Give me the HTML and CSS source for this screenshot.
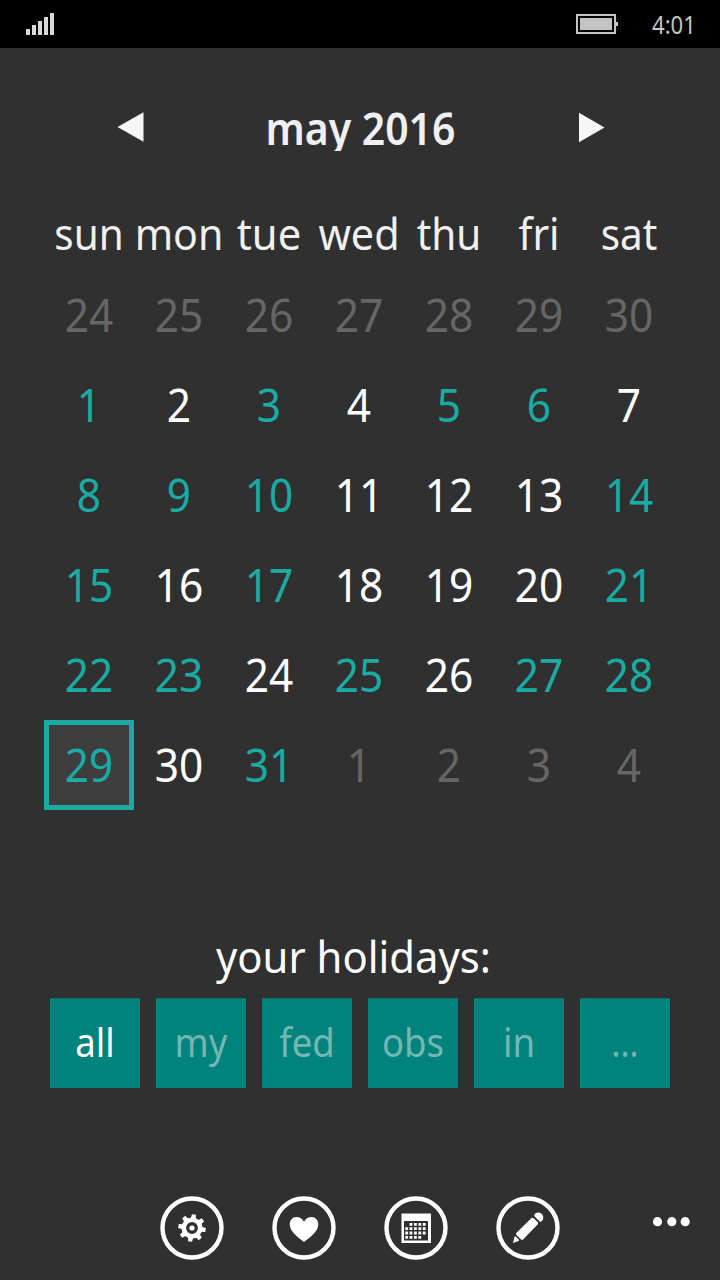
FILE: index.html
```html
<!DOCTYPE html>
<html lang="en">
<head>
<meta charset="utf-8">
<title>Holiday calendar</title>
<link rel="stylesheet" href="styles.css">
</head>
<body>
<div class="phone">
  <header class="status">
    <svg class="signal" width="28" height="22" viewBox="0 0 28 22" fill="#d8d8d8"><path d="M0 16h4v6H0zM6 12h4v10H6zM12 8h4v14h-4zM18 4h4v18h-4zM24 0h4v22h-4z"/></svg>
    <svg class="battery" width="42" height="20" viewBox="0 0 42 20"><path d="M1 1h38v18H1z" fill="none" stroke="#c4c4c4" stroke-width="2"/><path d="M4 4h32v12H4zM40 8h2v4h-2z" fill="#c4c4c4"/></svg>
    <span class="clock">4:01</span>
  </header>

  <nav class="month">
    <svg class="arrow prev" width="30" height="34" viewBox="0 0 30 34"><path d="M2.500 17 28.500 2.200V31.800z" fill="#f6f6f8"/></svg>
    <h1 class="month-name">may 2016</h1>
    <svg class="arrow next" width="30" height="34" viewBox="0 0 30 34"><path d="M28.500 17.500 3 2.800V32.200z" fill="#f6f6f8"/></svg>
  </nav>

  <div class="weekdays"><span class="sun">sun</span><span class="mon">mon</span><span class="tue">tue</span><span class="wed">wed</span><span class="thu">thu</span><span class="fri">fri</span><span class="sat">sat</span></div>

  <main class="days">
    <span class="day out">24</span><span class="day out">25</span><span class="day out">26</span><span class="day out">27</span><span class="day out">28</span><span class="day out">29</span><span class="day out">30</span>
    <span class="day hol">1</span><span class="day">2</span><span class="day hol">3</span><span class="day">4</span><span class="day hol">5</span><span class="day hol">6</span><span class="day">7</span>
    <span class="day hol">8</span><span class="day hol">9</span><span class="day hol">10</span><span class="day">11</span><span class="day">12</span><span class="day">13</span><span class="day hol">14</span>
    <span class="day hol">15</span><span class="day">16</span><span class="day hol">17</span><span class="day">18</span><span class="day">19</span><span class="day">20</span><span class="day hol">21</span>
    <span class="day hol">22</span><span class="day hol">23</span><span class="day">24</span><span class="day hol">25</span><span class="day">26</span><span class="day hol">27</span><span class="day hol">28</span>
    <div class="selected"><span class="day hol">29</span></div><span class="day">30</span><span class="day hol">31</span><span class="day out">1</span><span class="day out">2</span><span class="day out">3</span><span class="day out">4</span>
  </main>

  <h2 class="caption">your holidays:</h2>
  <div class="filters">
    <button class="filter active"><span class="label">all</span></button>
    <button class="filter"><span class="label">my</span></button>
    <button class="filter"><span class="label">fed</span></button>
    <button class="filter"><span class="label">obs</span></button>
    <button class="filter"><span class="label">in</span></button>
    <button class="filter"><span class="label dots">...</span></button>
  </div>

  <footer class="appbar">
    <svg class="action" width="64" height="64" viewBox="0 0 64 64">
      <circle cx="32" cy="32" r="29.500" class="ring"/>
      <g fill="#fff" transform="rotate(8 32 32)">
        <path id="tooth" d="M29.400 23 30 18.300H34L34.600 23zM29.400 41 30 45.700H34L34.600 41z"/>
        <use href="#tooth" transform="rotate(45 32 32)"/><use href="#tooth" transform="rotate(90 32 32)"/><use href="#tooth" transform="rotate(135 32 32)"/>
      </g>
      <circle cx="32" cy="32" r="8.200" fill="none" stroke="#fff" stroke-width="4.600"/>
      <circle cx="32" cy="32" r="2.600" fill="#fff"/>
    </svg>
    <svg class="action" width="64" height="64" viewBox="0 0 64 64">
      <circle cx="32" cy="32" r="29.500" class="ring"/>
      <path d="M32 46C26.500 42 17.700 35.500 17.700 28.300 17.700 24.500 20.500 21 24.500 21 27.800 21 30.500 22.800 32 25.800 33.500 22.800 36.200 21 39.500 21 43.500 21 46.300 24.500 46.300 28.300 46.300 35.500 37.500 42 32 46z" fill="#fff"/>
    </svg>
    <svg class="action" width="64" height="64" viewBox="0 0 64 64">
      <circle cx="32" cy="32" r="29.500" class="ring"/>
      <path fill="#fff" fill-rule="evenodd" d="M17.500 17.500h29.500V47H17.500zM20 25v19.500h24V25z"/>
      <path fill="#fff" d="M25.600 27h2.800v2.800h-2.800zM30 27h2.800v2.800H30zM34.400 27h2.800v2.800h-2.800zM38.800 27h2.800v2.800h-2.800zM21.300 31.300h2.800v2.800h-2.800zM25.600 31.300h2.800v2.800h-2.800zM30 31.300h2.800v2.800H30zM34.400 31.300h2.800v2.800h-2.800zM38.800 31.300h2.800v2.800h-2.800zM21.300 35.600h2.800v2.800h-2.800zM25.600 35.600h2.800v2.800h-2.800zM30 35.600h2.800v2.800H30zM34.400 35.600h2.800v2.800h-2.800zM38.800 35.600h2.800v2.800h-2.800zM21.300 39.900h2.800v2.800h-2.800zM25.600 39.900h2.800v2.800h-2.800zM30 39.900h2.800v2.800H30zM34.400 39.900h2.800v2.800h-2.800z"/>
    </svg>
    <svg class="action" width="64" height="64" viewBox="0 0 64 64">
      <circle cx="32" cy="32" r="29.500" class="ring"/>
      <path fill="#fff" d="M35.300 22.200Q36.500 21.200 37.700 22.200L41.800 26.300Q42.600 27.300 41.800 28.300L27.300 43.300Q26 44.500 24.800 43.300L20.500 39Q19.500 37.800 20.500 36.700zM38 19.800Q39 16.500 42.500 16.500 46.800 17 47.300 21.200 47.300 24.800 44.200 26zM18.500 40.800Q19.200 39.800 20 40.800L22.800 43.400Q23.500 44.300 22.500 45L17 47z"/>
    </svg>
    <svg class="more" width="38" height="10" viewBox="0 0 38 10" fill="#fff"><circle cx="5.500" cy="4.700" r="4.600"/><circle cx="19.800" cy="4.700" r="4.600"/><circle cx="33.200" cy="4.700" r="4.600"/></svg>
  </footer>
</div>
</body>
</html>
```

FILE: styles.css
```css
* { box-sizing: border-box; }
body { margin: 0; background: #303030; }
.phone {
  width: 720px;
  height: 1280px;
  overflow: hidden;
  background: #303030;
  color: #fff;
  font-family: "Noto Sans", "Open Sans", sans-serif;
  font-size: 45px;
}
.status {
  display: flex;
  height: 48px;
  padding: 13px 25px 0 26px;
  background: #000;
}
.battery { margin: 1px 34px 0 auto; }
.clock {
  width: 43px;
  margin-top: -9px;
  font-size: 26px;
  line-height: 40px;
  color: #c4c4c4;
  transform: scaleX(0.85);
  transform-origin: left;
}
.month {
  display: flex;
  justify-content: space-between;
  height: 55px;
  margin-top: 48px;
  padding: 0 114px 0 115px;
  color: #f0f0f2;
}
.arrow { flex: none; margin-top: 14px; }
.month-name {
  height: 63px;
  margin: 0;
  font-size: 45px;
  font-weight: 600;
  line-height: 63px;
  white-space: nowrap;
  transform: scaleX(0.91);
  clip-path: inset(0 0 8px 0);
}
.weekdays {
  display: grid;
  grid-template-columns: repeat(7, 90px);
  height: 67px;
  margin: 52px 46px 0 44px;
  font-size: 43.5px;
  line-height: 60px;
  color: #f0f0f0;
}
.weekdays span {
  display: flex;
  justify-content: center;
  transform: scaleX(0.93);
}
.weekdays .mon { transform: scaleX(0.945); }
.weekdays .tue { transform: scaleX(0.96); }
.weekdays .wed { transform: scaleX(0.95); }
.days {
  display: grid;
  grid-template-columns: repeat(7, 90px);
  grid-auto-rows: 90px;
  margin: 0 46px 0 44px;
}
.day {
  display: block;
  line-height: 90px;
  text-align: center;
  transform: scaleX(0.943);
}
.out { color: #666; }
.hol { color: #1aaba3; }
.selected {
  background: #3d3d3d;
  box-shadow: inset 0 0 0 5px #1aaba3;
}
.caption {
  height: 73px;
  margin: 115px 0 0;
  padding-left: 216px;
  font-size: 44px;
  font-weight: 400;
  line-height: 62px;
  white-space: nowrap;
  transform: scaleX(0.95);
  transform-origin: 216px 0;
}
.filters {
  display: flex;
  gap: 16px;
  padding-left: 50px;
}
.filter {
  width: 90px;
  height: 90px;
  padding: 0 0 2px;
  border: 0;
  background: #00837c;
  box-shadow: inset 0 1px #106e69;
  color: #73b7b3;
  font: 400 39.5px/88px "Noto Sans", "Open Sans", sans-serif;
}
.label {
  display: block;
  transform: scaleX(0.925);
}
.dots { transform: scaleX(0.85); }
.active { color: #fff; }
.appbar {
  display: flex;
  gap: 48px;
  margin-top: 108px;
  padding: 0 30px 0 160px;
}
.ring { fill: none; stroke: #fff; stroke-width: 4.4; }
.more { margin: 21px 0 0 auto; }
```
